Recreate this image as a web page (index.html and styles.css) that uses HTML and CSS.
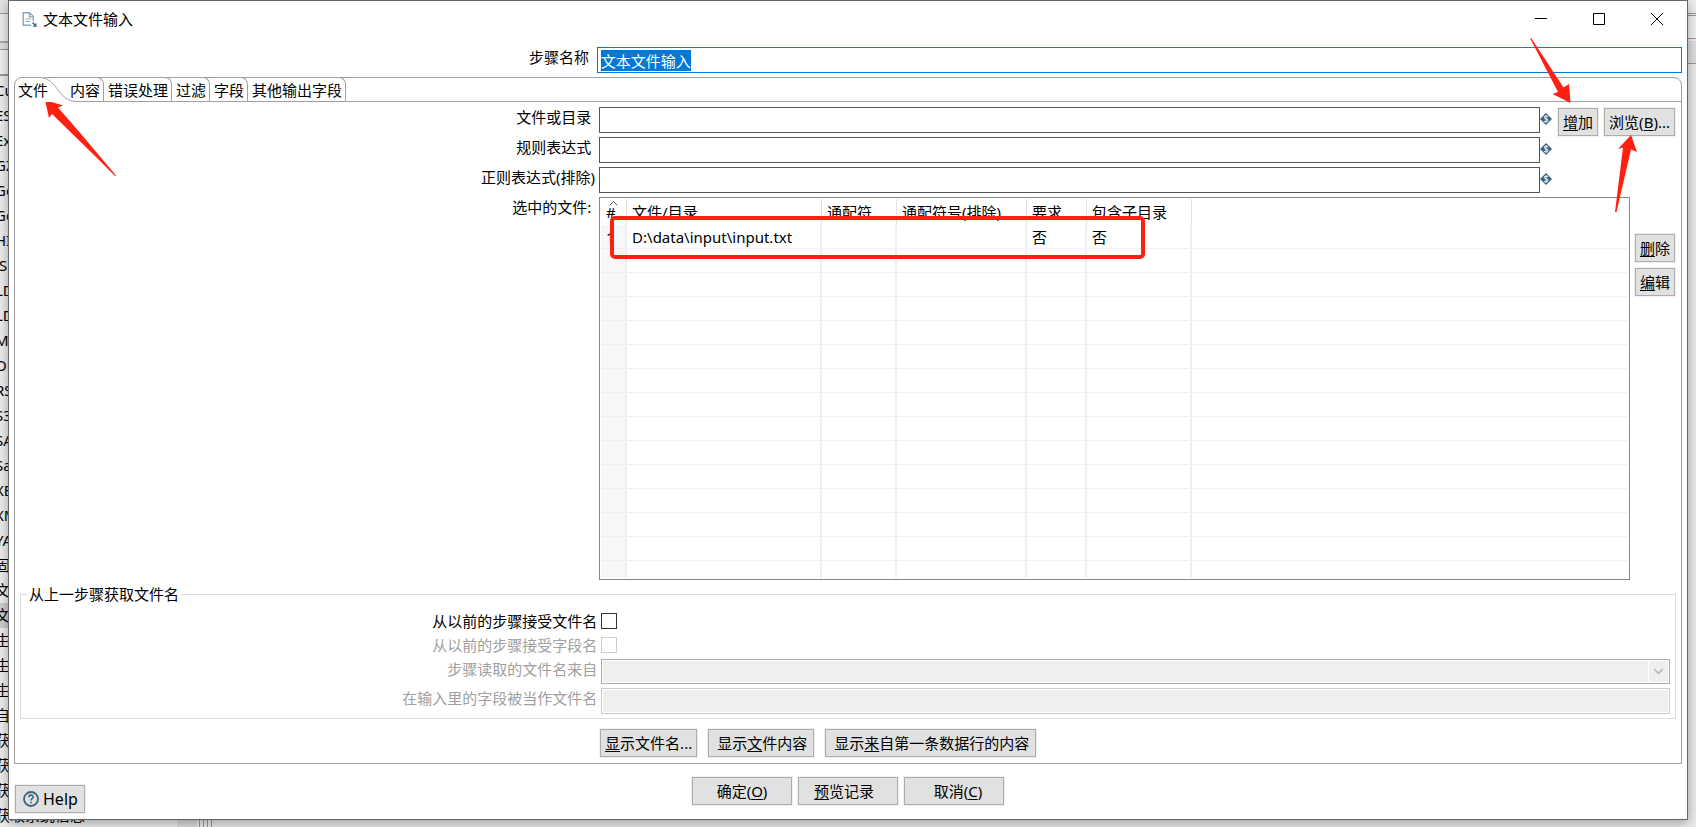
FILE: index.html
```html
<!DOCTYPE html>
<html lang="zh-CN">
<head>
<meta charset="utf-8">
<title>文本文件输入</title>
<link rel="stylesheet" href="styles.css">
</head>
<body>
<div class="backdrop" aria-hidden="true">
  <ul class="steps">
    <li>Cu</li><li>ES</li><li>Ex</li><li>GZ</li><li>Ge</li><li>Go</li><li>HI</li><li>JS</li><li>LD</li><li>LD</li>
    <li>M</li><li>OR</li><li>RS</li><li>S3</li><li>SA</li><li>Sa</li><li>XB</li><li>XM</li><li>YA</li><li>固</li>
    <li>文</li><li class="current">文</li><li>生</li><li>生</li><li>生</li><li>自</li><li>获</li><li>获</li><li>获</li><li>获取系统信息</li>
  </ul>
  <div class="scroll"></div>
  <div class="sash"></div>
  <div class="canvas"><div class="canvas-edge"></div></div>
</div>

<main class="dialog">
  <header class="titlebar">
    <svg class="file-icon" width="16" height="16" viewBox="0 0 16 16" fill="none" stroke="#8ba7bb" stroke-width="1.4">
      <path d="M9 13.300H1.200V.800H7.500L11.300 4.500V9"/><path d="M7.300 1V4.800H11M3.500 7H9M3.500 9.500H8" stroke-width="1.200"/>
      <path d="M10.500 10.500L13 13" stroke="#3d6480"/><path d="M14.500 10.800V14.800H10.500Z" fill="#3d6480" stroke="none"/>
    </svg>
    <h1>文本文件输入</h1>
    <div class="window-buttons">
      <button type="button" aria-label="最小化"><svg width="12" height="12" stroke="#000"><path d="M0 5.500H12"/></svg></button>
      <button type="button" aria-label="最大化"><svg width="12" height="12" fill="none" stroke="#000"><path d="M.500.500H11.500V11.500H.500Z"/></svg></button>
      <button type="button" aria-label="关闭"><svg width="12" height="12" stroke="#000"><path d="M0 0L12 12M12 0L0 12"/></svg></button>
    </div>
  </header>

  <div class="step-row">
    <label class="label" for="step-name">步骤名称 </label>
    <input class="step-name" id="step-name" type="text" value="文本文件输入">
  </div>

  <section class="folder">
    <nav class="tabs">
      <button type="button" class="tab active">文件<svg class="tab-curve" width="38" height="25" viewBox="0 0 38 25"><path d="M0 0H2C19 2 18 24.500 38 24.500V25H0Z" fill="#fff"/><path d="M0 .500C19 .500 18 24.500 38 24.500" fill="none" stroke="#a0a0a0"/></svg></button>
      <button type="button" class="tab">内容</button>
      <button type="button" class="tab">错误处理</button>
      <button type="button" class="tab">过滤</button>
      <button type="button" class="tab">字段</button>
      <button type="button" class="tab">其他输出字段</button>
    </nav>

    <div class="page">
      <div class="field">
        <label class="label" for="path">文件或目录 </label>
        <input class="text" id="path" type="text">
        <div class="side">
          <svg class="var" width="12" height="12" viewBox="0 0 12 12"><path d="M6 0L12 6L6 12L0 6Z" fill="#3d6480"/><path d="M8 3.800C7 2.800 4.300 2.900 4.300 4.500C4.300 6.300 7.900 5.400 7.900 7.400C7.900 9.100 5 9.200 4 8.100M6 2V10" fill="none" stroke="#dce6ee" stroke-width="1.100"/></svg>
          <button type="button" class="btn add"><u>增</u>加</button>
          <button type="button" class="btn browse">浏览(<u>B</u>)...</button>
        </div>
      </div>
      <div class="field">
        <label class="label" for="mask">规则表达式 </label>
        <input class="text" id="mask" type="text">
        <div class="side">
          <svg class="var" width="12" height="12" viewBox="0 0 12 12"><path d="M6 0L12 6L6 12L0 6Z" fill="#3d6480"/><path d="M8 3.800C7 2.800 4.300 2.900 4.300 4.500C4.300 6.300 7.900 5.400 7.900 7.400C7.900 9.100 5 9.200 4 8.100M6 2V10" fill="none" stroke="#dce6ee" stroke-width="1.100"/></svg>
        </div>
      </div>
      <div class="field">
        <label class="label" for="exclude">正则表达式(排除)</label>
        <input class="text" id="exclude" type="text">
        <div class="side">
          <svg class="var" width="12" height="12" viewBox="0 0 12 12"><path d="M6 0L12 6L6 12L0 6Z" fill="#3d6480"/><path d="M8 3.800C7 2.800 4.300 2.900 4.300 4.500C4.300 6.300 7.900 5.400 7.900 7.400C7.900 9.100 5 9.200 4 8.100M6 2V10" fill="none" stroke="#dce6ee" stroke-width="1.100"/></svg>
        </div>
      </div>

      <div class="files">
        <span class="label" id="files-label">选中的文件: </span>
        <div class="grid-box">
          <table class="grid" aria-labelledby="files-label">
            <colgroup><col class="c-num"><col class="c-file"><col class="c-wild"><col class="c-excl"><col class="c-req"><col class="c-sub"><col></colgroup>
            <thead><tr>
              <th class="num">#<svg class="sort" width="9" height="5" fill="none" stroke="#555"><path d="M.500 4.500L4.500.500L8.500 4.500"/></svg></th>
              <th>文件/目录</th><th>通配符</th><th>通配符号(排除)</th><th>要求</th><th>包含子目录</th><th></th>
            </tr></thead>
            <tbody>
              <tr><td class="num">1</td><td>D:\data\input\input.txt</td><td></td><td></td><td>否</td><td>否</td><td></td></tr>
              <tr><td></td><td></td><td></td><td></td><td></td><td></td><td></td></tr>
              <tr><td></td><td></td><td></td><td></td><td></td><td></td><td></td></tr>
              <tr><td></td><td></td><td></td><td></td><td></td><td></td><td></td></tr>
              <tr><td></td><td></td><td></td><td></td><td></td><td></td><td></td></tr>
              <tr><td></td><td></td><td></td><td></td><td></td><td></td><td></td></tr>
              <tr><td></td><td></td><td></td><td></td><td></td><td></td><td></td></tr>
              <tr><td></td><td></td><td></td><td></td><td></td><td></td><td></td></tr>
              <tr><td></td><td></td><td></td><td></td><td></td><td></td><td></td></tr>
              <tr><td></td><td></td><td></td><td></td><td></td><td></td><td></td></tr>
              <tr><td></td><td></td><td></td><td></td><td></td><td></td><td></td></tr>
              <tr><td></td><td></td><td></td><td></td><td></td><td></td><td></td></tr>
              <tr><td></td><td></td><td></td><td></td><td></td><td></td><td></td></tr>
              <tr><td></td><td></td><td></td><td></td><td></td><td></td><td></td></tr>
              <tr class="cut"><td></td><td></td><td></td><td></td><td></td><td></td><td></td></tr>
            </tbody>
          </table>
          <div class="highlight"></div>
        </div>
        <div class="row-actions">
          <button type="button" class="btn"><u>删</u>除</button>
          <button type="button" class="btn"><u>编</u>辑</button>
        </div>
      </div>

      <fieldset class="group">
        <legend>从上一步骤获取文件名</legend>
        <div class="option">
          <label class="label" for="accept">从以前的步骤接受文件名</label>
          <input class="check" id="accept" type="checkbox">
        </div>
        <div class="option off">
          <label class="label" for="pass">从以前的步骤接受字段名</label>
          <input class="check" id="pass" type="checkbox" disabled>
        </div>
        <div class="option source off">
          <label class="label" for="source">步骤读取的文件名来自</label>
          <div class="select-wrap">
            <select id="source" disabled><option></option></select>
            <svg class="chevron" width="20" height="21" viewBox="0 0 20 21"><path d="M5.500 8L10 12.500L14.500 8" fill="none" stroke="#bcbcbc" stroke-width="2"/></svg>
          </div>
        </div>
        <div class="option input-field off">
          <label class="label" for="field-name">在输入里的字段被当作文件名</label>
          <input class="text" id="field-name" type="text" disabled>
        </div>
      </fieldset>

      <div class="show-actions">
        <button type="button" class="btn"><u>显</u>示文件名...</button>
        <button type="button" class="btn roomy">显示<u>文</u>件内容</button>
        <button type="button" class="btn roomy">显示<u>来</u>自第一条数据行的内容</button>
      </div>
    </div>
  </section>

  <footer class="bottom">
    <button type="button" class="btn help">
      <svg width="16" height="16" viewBox="0 0 16 16" fill="none" stroke="#3d6480"><circle cx="8" cy="8" r="7" stroke-width="1.800"/><path d="M5.800 6.300C5.800 3.300 10.200 3.500 10.200 6C10.200 7.600 8 7.600 8 9.400M8 10.700V12.200" stroke-width="1.600"/></svg>Help</button>
    <div class="main-actions">
      <button type="button" class="btn">确定(<u>O</u>)</button>
      <button type="button" class="btn"><u>预</u>览记录  </button>
      <button type="button" class="btn">  取消(<u>C</u>)</button>
    </div>
  </footer>

  <svg class="arrow arrow-tab" width="72" height="77" viewBox="0 0 72 77"><path d="M0 0L18 5.500L13 7.500L36 34L71 75.500L70 76L49 55L7 14L4 18Z"/></svg>
  <svg class="arrow arrow-add" width="42" height="66" viewBox="0 0 42 66"><path d="M0 0L1.500.500L33.500 49.500L39 46L40.500 65L22.500 56L28 54Z"/></svg>
  <svg class="arrow arrow-browse" width="23" height="78" viewBox="0 0 23 78"><path d="M16 0L22 17L16 14.500L1.500 77H0L8 12.500L3 14Z"/></svg>
</main>
<script src="main.js"></script>
</body>
</html>
```

FILE: styles.css
```css
* { box-sizing: border-box; }

body {
  position: relative;
  min-height: 100vh;
  margin: 0;
  padding: 0 8px 8px;
  overflow: hidden;
  background: #ececec;
  color: #000;
  font: 15px/22px "Noto Sans", "Noto Sans CJK SC", sans-serif;
}

button, input, select { font: inherit; color: inherit; }
u { text-underline-offset: 2px; }

/* main window behind the dialog */
.backdrop {
  position: absolute;
  inset: 0;
  display: flex;
  overflow: hidden;
}
.steps {
  width: 177px;
  margin: 0;
  padding: 78px 0 0;
  list-style: none;
  line-height: 25px;
  background: linear-gradient(#e4e4e4 13px, #999 13px 14px, #f0f0f0 14px 41px, #aaa 41px 43px, #e4e4e4 43px 49px, #999 49px 50px, #f4f4f4 50px 74px, #999 74px 76px, #f0f0f0 76px);
}
.steps li { height: 25px; text-indent: -5px; white-space: nowrap; }
.steps .current { background: #cfcfcf; }
.scroll { width: 20px; background: #dedede; }
.sash {
  width: 15px;
  background: repeating-linear-gradient(90deg, #f0f0f0 0 2px, #999 2px 3px, #f0f0f0 3px 4px);
}
.canvas { flex: 1; display: flex; justify-content: flex-end; }
.canvas-edge {
  width: 16px;
  background: linear-gradient(#f0f0f0 13px, #999 13px 14px, #eee 14px 15px, #999 15px 16px, #f4f4f4 16px 38px, #999 38px 39px, #f0f0f0 39px 41px, #dfdfdf 41px 63px, #999 63px 64px, #ececec 64px);
}

.dialog {
  position: relative;
  padding: 0 5px 6px;
  border: 1px solid #666;
  background: #fff;
  box-shadow: 0 3px 12px rgba(0, 0, 0, .35);
}

.titlebar { display: flex; height: 46px; padding-left: 8px; }
.file-icon { margin-top: 11px; }
h1 { flex: 1; margin: 7px 0 0 5px; font-size: 15px; font-weight: 400; line-height: 22px; }
.window-buttons { display: flex; height: 36px; margin-right: -4px; }
.window-buttons button {
  display: grid;
  place-items: center;
  width: 58px;
  padding: 0;
  border: 0;
  background: none;
}

.label { padding-right: 4px; line-height: 20px; text-align: right; white-space: pre; }

.step-row { display: grid; grid-template-columns: calc(35% - 1px) 1fr; }
.step-name {
  height: 26px;
  min-width: 0;
  padding: 0 3px;
  border: 1px solid #0078d7;
  outline: 0;
}
.step-name::selection { background: #0078d7; color: #fff; }

.folder {
  margin-top: 4px;
  border: 1px solid #a0a0a0;
  border-radius: 8px 8px 0 0;
}
.tabs { display: flex; height: 24px; border-bottom: 1px solid #a0a0a0; }
.tab {
  margin-top: -1px;
  padding: 1px 3px 0 4px;
  border: 1px solid #a0a0a0;
  border-width: 1px 1px 0 0;
  border-radius: 0 7px 0 0;
  background: none;
  line-height: 22px;
}
.tab.active {
  position: relative;
  z-index: 1;
  height: 25px;
  width: 51px;
  padding: 1px 0 0 3px;
  border-color: transparent;
  border-bottom: 1px solid #fff;
  border-radius: 7px 0 0 0;
  text-align: left;
}
.tab-curve { position: absolute; left: 24px; top: -1px; z-index: -1; }

.page { padding: 5px 0 6px; }
.field { display: grid; grid-template-columns: calc(35% + 1px) 1fr 141px; height: 30px; }
.text {
  height: 26px;
  min-width: 0;
  padding: 0 3px;
  border: 1px solid #555;
  background: #fff;
  outline: 0;
}
.side { display: flex; align-items: flex-start; padding-top: 1px; }
.var { flex: none; margin-top: 5px; }

.btn {
  height: 28px;
  padding: 0 4px;
  border: 1px solid #adadad;
  background: #e1e1e1;
  box-shadow: 0 0 0 1px #f0f0f0;
  line-height: 22px;
  white-space: pre;
}
.btn.roomy { padding: 0 6px 0 8px; }
.add { margin-left: 6px; }
.browse { width: 71px; margin-left: 6px; }

.files { display: grid; grid-template-columns: calc(35% + 1px) 1fr 51px; }
.grid-box { position: relative; min-width: 0; padding: 1px; border: 1px solid #828790; }
.grid { width: 100%; table-layout: fixed; border-collapse: separate; border-spacing: 0; }
.c-num { width: 26px; }
.c-file { width: 195px; }
.c-wild { width: 75px; }
.c-excl { width: 130px; }
.c-req { width: 60px; }
.c-sub { width: 105px; }
.grid th, .grid td { padding: 0 0 0 5px; line-height: 22px; text-align: left; font-weight: 400; white-space: nowrap; }
.grid th { height: 26px; border-right: 1px solid #e2e2e2; }
.grid td { height: 24px; border-right: 2px solid #ebf0f7; border-bottom: 1px solid #f0f0f0; }
.grid td:first-child { background: #f7f7f7; }
.grid th:last-child, .grid td:last-child { border-right: 0; }
.grid .cut td { height: 17px; border-bottom: 0; }
.grid .num { position: relative; }
.sort { position: absolute; left: 8px; top: 2px; }
.highlight {
  position: absolute;
  left: 10px;
  top: 18px;
  width: 535px;
  height: 43px;
  border: 4px solid #ff2012;
  border-radius: 5px;
}
.row-actions { display: flex; flex-direction: column; align-items: flex-start; gap: 6px; padding: 37px 0 0 5px; }

.group { min-width: 0; margin: 3px 5px 0; padding: 4px 5px 4px 0; border: 1px solid #dcdcdc; }
.group legend { margin-left: 6px; padding: 0 2px; }
.option { display: grid; grid-template-columns: calc(35% + 3px) 1fr; }
.option .label { line-height: 24px; }
.off { color: #a0a0a0; }
.check {
  appearance: none;
  width: 16px;
  height: 16px;
  margin: 4px 0 0;
  border: 1px solid #333;
  background: #fff;
}
.check:disabled { border-color: #ccc; }
.source { margin-top: 2px; }
.input-field { margin-top: 4px; }
.source .label, .input-field .label { line-height: 20px; }
.select-wrap { position: relative; display: flex; }
.select-wrap select {
  appearance: none;
  width: 100%;
  height: 25px;
  padding: 0 24px 0 4px;
  border: 1px solid #acacb0;
  border-radius: 0;
  background: #efefef;
  box-shadow: inset 0 0 0 1px #fff;
  opacity: 1;
}
.chevron { position: absolute; right: 2px; top: 2px; border-left: 1px solid #fff; }
.text:disabled { border-color: #ccc; background: #efefef; box-shadow: inset 0 0 0 1px #fff; }

.show-actions { display: flex; gap: 11px; margin-top: 10px; padding-left: calc(35% + 2px); }

.bottom {
  display: grid;
  grid-template-columns: 1fr auto 1fr;
  align-items: start;
  margin-top: 13px;
}
.main-actions { display: flex; gap: 6px; }
.main-actions .btn { width: 100px; }
.help {
  display: flex;
  justify-self: start;
  align-items: center;
  gap: 4px;
  margin: 8px 0 0 1px;
  padding: 0 6px 0 7px;
  font-size: 16px;
}

/* annotation arrows */
.arrow { position: absolute; fill: #ff2012; pointer-events: none; }
.arrow-tab { left: 36px; top: 99px; }
.arrow-add { right: 115px; top: 37px; }
.arrow-browse { right: 49px; top: 134px; }
```

FILE: main.js
```js
const stepName = document.getElementById("step-name");
stepName.focus();
stepName.select();
```
